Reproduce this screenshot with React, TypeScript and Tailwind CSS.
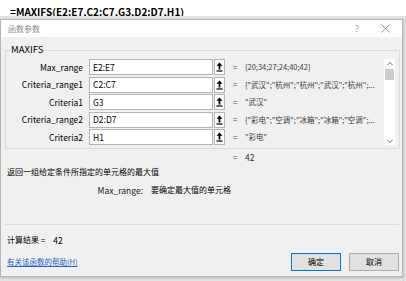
import React from "react";

const rows = [
  { label: "Max_range", ref: "E2:E7", value: "{20;34;27;24;40;42}" },
  { label: "Criteria_range1", ref: "C2:C7", value: "{\"武汉\";\"杭州\";\"杭州\";\"武汉\";\"杭州\";..." },
  { label: "Criteria1", ref: "G3", value: "\"武汉\"" },
  { label: "Criteria_range2", ref: "D2:D7", value: "{\"彩电\";\"空调\";\"冰箱\";\"冰箱\";\"空调\";..." },
  { label: "Criteria2", ref: "H1", value: "\"彩电\"" },
];

const RefButton = () => (
  <div className="w-[11px] h-[16px] ml-[1px] bg-white border border-[#b4b4b4] flex items-center justify-center">
    <svg width="7" height="10" viewBox="0 0 7 10">
      <path d="M3.5 0.5 L6.5 3.8 L4.4 3.8 L4.4 7.5 L2.6 7.5 L2.6 3.8 L0.5 3.8 Z" fill="#000" />
      <rect x="0.5" y="8.4" width="6" height="1.2" fill="#000" />
    </svg>
  </div>
);

export default function App() {
  return (
    <div
      className="w-[406px] h-[281px] overflow-hidden bg-[#e3e3e3] text-[8.5px] text-black flex flex-col"
      style={{ fontFamily: '"Noto Sans CJK SC", sans-serif' }}
    >
      <div className="h-[16px] shrink-0 bg-white pl-[10px] pt-[6px] font-bold text-[10px] leading-[12px]">
        =MAXIFS(E2:E7,C2:C7,G3,D2:D7,H1)
      </div>
      <div className="h-[3px] shrink-0 bg-[#e1e1e1]" />
      <div className="flex flex-1 min-h-0">
        <div className="w-[403px] h-[258px] shrink-0 bg-[#f0f0f0] border border-[#b5b5b5] shadow-[1px_1px_2px_rgba(0,0,0,0.2)] flex flex-col">
          <div className="h-[17px] shrink-0 bg-white flex items-center pl-[7px] pr-[12px]">
            <span className="text-[#8c8c8c] text-[8px]">函数参数</span>
            <span className="ml-auto text-[#9a9a9a] text-[9px] mr-[22px]">?</span>
            <svg width="9" height="9" viewBox="0 0 9 9">
              <path d="M0.5 0.5 L8.5 8.5 M8.5 0.5 L0.5 8.5" stroke="#8a8a8a" strokeWidth="0.9" />
            </svg>
          </div>
          <div className="pl-[4px] pr-[2px] pt-[13px] flex flex-col flex-1">
            <div className="relative border border-[#dcdcdc] h-[99px] pt-[8px] pl-[1px]">
              <span className="absolute -top-[8px] left-[4px] bg-[#f0f0f0] px-[1px] text-[9.5px] leading-[12px]">
                MAXIFS
              </span>
              <div className="flex">
                <div className="flex flex-col gap-[1.5px]">
                  {rows.map((r) => (
                    <div key={r.label} className="flex items-center h-[16px]">
                      <div className="w-[76px] text-right mr-[6px]">{r.label}</div>
                      <div className="w-[124px] h-[16px] bg-white border border-[#b4b4b4] flex items-center pl-[3px]">
                        {r.ref}
                      </div>
                      <RefButton />
                      <div className="w-[20px] text-center text-[#555]">=</div>
                      <div className="w-[137px] overflow-hidden whitespace-nowrap text-[#3c3c3c] text-[7.5px]">
                        {r.value}
                      </div>
                    </div>
                  ))}
                </div>
                <div className="ml-[2px] w-[11px] h-[86px] bg-white flex flex-col items-center pt-[1px]">
                  <svg width="8" height="8" viewBox="0 0 8 8">
                    <path d="M1.5 5 L4 2.5 L6.5 5" stroke="#555" fill="none" strokeWidth="0.9" />
                  </svg>
                  <div className="w-[9px] h-[11px] mt-[1px] bg-[#cdcdcd]" />
                  <div className="flex-1" />
                  <svg width="8" height="8" viewBox="0 0 8 8">
                    <path d="M1.5 3 L4 5.5 L6.5 3" stroke="#555" fill="none" strokeWidth="0.9" />
                  </svg>
                </div>
              </div>
            </div>
            <div className="flex h-[17px] items-center">
              <div className="w-[220px]" />
              <div className="w-[20px] text-center text-[#555]">=</div>
              <div className="text-[#333]">42</div>
            </div>
            <div className="h-[11px] flex items-center pl-[2px] text-[8px]">返回一组给定条件所指定的单元格的最大值</div>
            <div className="h-[26px] flex items-center">
              <span className="w-[138px] text-right mr-[8px] text-[#222]">Max_range:</span>
              <span className="text-[8px]">要确定最大值的单元格</span>
            </div>
            <div className="h-[21px]" />
            <div className="h-px bg-[#dcdcdc] mr-[1px]" />
            <div className="h-[14px] mt-[8px] flex items-center pl-[2px] text-[8px]">
              计算结果 =<span className="ml-[8px] text-[8.5px]">42</span>
            </div>
            <div className="flex items-center h-[18px] mt-[6px]">
              <span className="pl-[2px] text-[#1e63c4] underline text-[7.5px]">有关该函数的帮助(H)</span>
              <div className="ml-auto flex gap-[8px] mr-[1px]">
                <button className="w-[50px] h-[18px] border border-[#0078d7] bg-[#e1e1e1] text-[8px]">确定</button>
                <button className="w-[50px] h-[18px] border border-[#adadad] bg-[#e1e1e1] text-[8px]">取消</button>
              </div>
            </div>
          </div>
        </div>
        <div className="flex-1 border-l border-[#d0d0d0]" />
      </div>
    </div>
  );
}
